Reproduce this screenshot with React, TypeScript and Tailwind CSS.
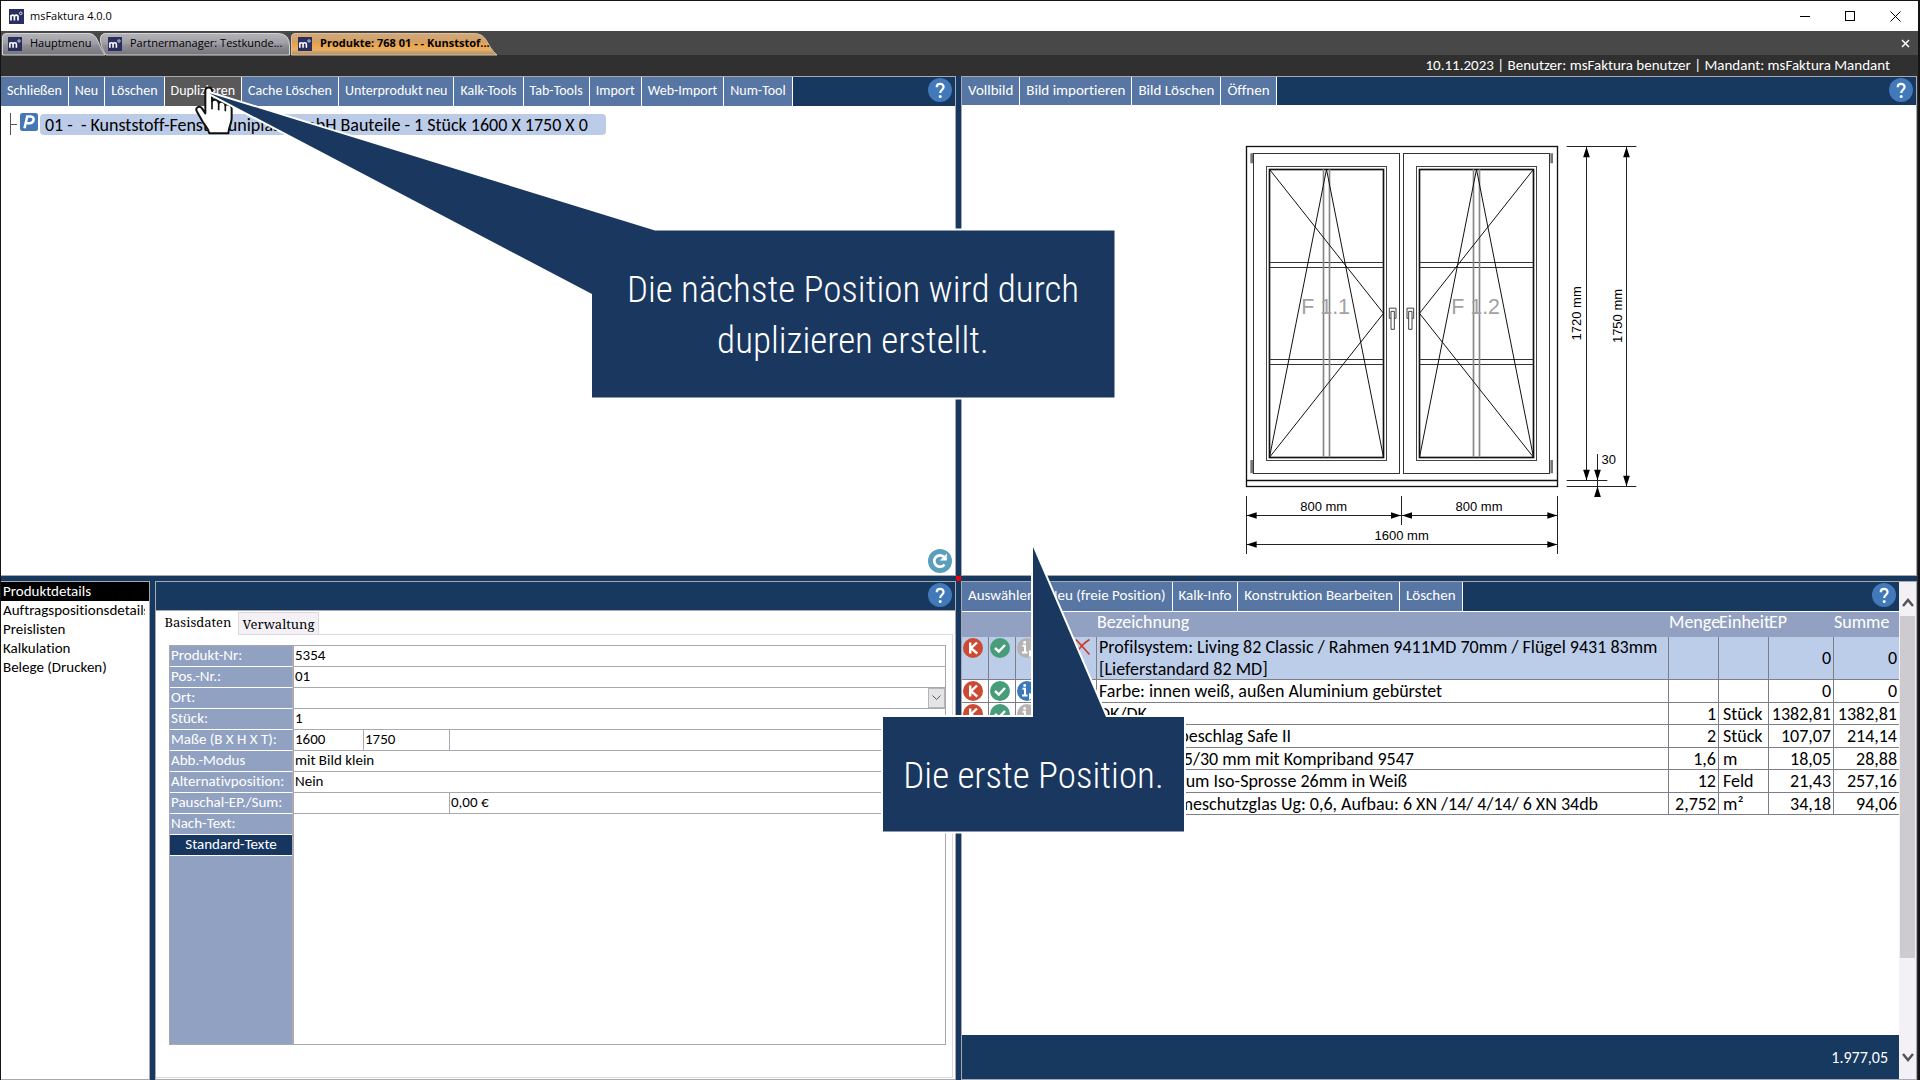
import React from "react";

const BLANK = "";

function AppIcon({ small = false }: { small?: boolean }) {
  return (
    <svg viewBox="0 0 15 15" className={small ? "h-3.5 w-3.5 shrink-0" : "h-[15px] w-[15px] shrink-0"} aria-hidden="true">
      <rect width="15" height="15" fill="#2a2f5f" />
      <path d="M2 11.500V6M2 7.800C2 5.600 5.400 5.600 5.400 7.800V11.500M5.400 7.800C5.400 5.600 9 5.600 9 7.800V11.500" fill="none" stroke="#fff" strokeWidth="1.700" />
      <circle cx="11.800" cy="4.300" r="1.300" fill="none" stroke="#e6e6f0" strokeWidth="0.900" />
    </svg>
  );
}

function TitleBar() {
  return (
    <header className="flex h-[30px] shrink-0 items-center bg-white pl-2">
      <AppIcon />
      <h1 className="ml-1.5 font-['Open_Sans',sans-serif] text-[11px] text-black">msFaktura 4.0.0</h1>
      <div className="ml-auto flex h-full items-center">
        <button aria-label="Minimieren" className="grid h-full w-[45px] place-items-center">
          <svg width="11" height="11" viewBox="0 0 11 11"><path d="M0 5.500H10" stroke="#000" /></svg>
        </button>
        <button aria-label="Maximieren" className="grid h-full w-[45px] place-items-center">
          <svg width="11" height="11" viewBox="0 0 11 11"><rect x="0.500" y="0.500" width="9" height="9" fill="none" stroke="#000" /></svg>
        </button>
        <button aria-label="Schließen" className="grid h-full w-[45px] place-items-center">
          <svg width="11" height="11" viewBox="0 0 11 11"><path d="M0.500 0.500L10.500 10.500M10.500 0.500L0.500 10.500" stroke="#000" /></svg>
        </button>
      </div>
    </header>
  );
}

type TabProps = { label: string; active?: boolean; width: string; path: string; box: string; indent: string };

function WindowTab({ label, active, width, path, box, indent }: TabProps) {
  const id = active ? "tab-active" : "tab-idle-" + label.slice(0, 4);
  return (
    <button role="tab" aria-selected={!!active} className={`relative flex h-[23px] items-center text-left ${width}`}>
      <svg className="absolute inset-0 h-full w-full overflow-visible" viewBox={box} preserveAspectRatio="none" aria-hidden="true">
        <defs>
          <linearGradient id={id} x1="0" y1="0" x2="0" y2="1">
            {active ? (
              <>
                <stop offset="0" stopColor="#d3a878" />
                <stop offset="0.400" stopColor="#d2a06a" />
                <stop offset="0.480" stopColor="#eda347" />
                <stop offset="0.750" stopColor="#e7b166" />
                <stop offset="1" stopColor="#a88c70" />
              </>
            ) : (
              <>
                <stop offset="0" stopColor="#b4b3b8" />
                <stop offset="0.450" stopColor="#a09fa5" />
                <stop offset="0.550" stopColor="#908f96" />
                <stop offset="1" stopColor="#757479" />
              </>
            )}
          </linearGradient>
        </defs>
        <path d={path} fill={`url(#${id})`} stroke={active ? "#dcc09c" : "#d4d4d8"} />
      </svg>
      <span className={`relative flex items-center ${indent}`}>
        <AppIcon small />
        <span className={`ml-2 whitespace-nowrap font-['Open_Sans',sans-serif] text-[11px] text-black ${active ? "font-bold" : ""}`}>{label}</span>
      </span>
    </button>
  );
}

function TabStrip() {
  return (
    <nav className="flex h-6 shrink-0 items-end bg-[#484848]" aria-label="Fenster">
      <div role="tablist" className="flex items-end">
        <WindowTab label="Hauptmenu" width="w-[99px]" box="0 0 99 23" indent="pl-[7px]"
          path="M1.500 23V5Q1.500 1.500 5 1.500H88C97 1.500 97 14 104 23Z" />
        <WindowTab label="Partnermanager: Testkunde..." width="w-[190px]" box="0 0 190 23" indent="pl-2"
          path="M6 23C2 17 0.500 12 0.500 7Q0.500 1.500 6 1.500H178Q189.500 1.500 189.500 14V23Z" />
        <WindowTab active label="Produkte: 768 01 - - Kunststof..." width="w-[208px]" box="0 0 208 23" indent="pl-2"
          path="M1.500 23V5Q1.500 1.500 5 1.500H184C198 1.500 196 14 207 23Z" />
      </div>
      <button aria-label="Register schließen" className="ml-auto mr-1.5 grid h-full w-3.5 place-items-center">
        <svg width="9" height="9" viewBox="0 0 9 9"><path d="M1 1L8 8M8 1L1 8" stroke="#fff" strokeWidth="1.500" /></svg>
      </button>
    </nav>
  );
}

function HelpButton() {
  return (
    <button aria-label="Hilfe" className="h-6 w-6 shrink-0">
      <svg viewBox="0 0 24 24" className="h-6 w-6">
        <circle cx="12" cy="12" r="12" fill="#4179bb" />
        <path d="M8.700 9.200C8.700 4.800 15.600 4.900 15.600 9C15.600 11.600 12.200 11.900 12.200 15" fill="none" stroke="#fff" strokeWidth="2.200" />
        <circle cx="12.200" cy="18.400" r="1.500" fill="#fff" />
      </svg>
    </button>
  );
}

type ToolbarProps = { items: string[]; hovered?: string; height: string; textSize?: string };

function Toolbar({ items, hovered, height, textSize = "text-[15px]" }: ToolbarProps) {
  return (
    <div role="toolbar" className={`flex shrink-0 items-start bg-[#17385f] ${height}`}>
      {items.map((item) => (
        <button
          key={item}
          className={`h-full whitespace-nowrap border-r border-white px-1.5 pb-0.5 text-white ${textSize} ${item === hovered ? "bg-[#595959]" : "bg-[#5776a3]"}`}
        >
          {item}
        </button>
      ))}
      <div className="ml-auto mr-[3px] mt-px"><HelpButton /></div>
    </div>
  );
}

function ProductTree() {
  return (
    <section className="flex min-h-0 min-w-0 flex-col border-r border-t border-b border-[#a9a8b2] bg-white">
      <Toolbar
        height="h-[29px]"
        textSize="text-[14px]"
        hovered="Duplizieren"
        items={["Schließen", "Neu", "Löschen", "Duplizieren", "Cache Löschen", "Unterprodukt neu", "Kalk-Tools", "Tab-Tools", "Import", "Web-Import", "Num-Tool"]}
      />
      <ul role="tree" className="flex-1 pt-[7px]">
        <li role="treeitem" aria-selected="true" className="flex items-start pl-[9px]">
          <svg width="10" height="22" viewBox="0 0 10 22" aria-hidden="true"><path d="M0.500 0V22M0 11.500H7" stroke="#555" fill="none" /></svg>
          <svg width="18" height="18" viewBox="0 0 18 18" aria-hidden="true">
            <rect width="18" height="18" rx="2.500" fill="#4377b5" />
            <path d="M4.500 15.300L7.200 3.500H10.500C15.300 3.500 14.200 10.300 9.500 10.300H6" fill="none" stroke="#fff" strokeWidth="2.500" />
          </svg>
          <span className="ml-0.5 mt-px h-[21px] w-[566px] whitespace-pre rounded-sm bg-[#bccce8] pl-[5px] text-[18px] leading-[22px] text-black">
            01 -  - Kunststoff-Fenster uniplast GmbH Bauteile - 1 Stück 1600 X 1750 X 0
          </span>
        </li>
      </ul>
      <div className="flex justify-end pb-0.5 pr-[3px]">
        <button aria-label="Aktualisieren">
          <svg width="24" height="24" viewBox="0 0 24 24">
            <circle cx="12" cy="12" r="12" fill="#5b9fbd" />
            <path d="M16.500 15.500A5.700 5.700 0 1 1 16 8" fill="none" stroke="#fff" strokeWidth="2.700" />
            <path d="M18.800 4.500V11.500H11.800Z" fill="#fff" />
          </svg>
        </button>
      </div>
    </section>
  );
}

function Sash({ x, label, lx, handle }: { x: number; label: string; lx: number; handle: number }) {
  const mid = x + 171;
  return (
    <g fill="none" stroke="#111" strokeWidth="3">
      <rect x={x - 9} y="109.500" width="360" height="882" stroke="#444" />
      <rect x={x} y="118.500" width="342" height="864" strokeWidth="5" />
      <path d={`M${x} 397.500H${x + 342}M${x} 412.500H${x + 342}M${x} 688.500H${x + 342}M${x} 703.500H${x + 342}`} stroke="#333" />
      <path d={`M${mid - 9} 118V982M${mid + 9} 118V982`} stroke="#888" strokeWidth="5" />
      <path d={`M${x} 982L${mid} 118L${x + 342} 982`} />
      <path d={handle > 545 ? `M${x + 342} 118L${x} 550L${x + 342} 982` : `M${x} 118L${x + 342} 550L${x} 982`} />
      <path d={`M${handle - 10} 565V534.500H${handle + 10}V565H${handle + 5}V598H${handle - 5}V544H${handle + 5}V565M${handle - 10} 565H${handle - 5}`} stroke="#444" />
      <text x={lx} y="551" fontSize="64" fill="#a3a1a6" stroke="none" fontFamily="Liberation Sans, sans-serif">{label}</text>
    </g>
  );
}

function WindowDrawing() {
  const arrow = (x: number, y: number, dx: number, dy: number) =>
    dx !== 0 ? `M${x} ${y}l${dx * 30} -10v20z` : `M${x} ${y}l-10 ${dy * 32}h20z`;
  return (
    <svg width="440" height="440" viewBox="0 0 1320 1320" role="img" aria-label="Fensterzeichnung F 1.1 und F 1.2">
      <g fill="none" stroke="#111" strokeWidth="3">
        <rect x="79.500" y="49.500" width="933" height="1020" strokeWidth="4" />
        <path d="M79 1051.500H1012" strokeWidth="5" />
        <rect x="100.500" y="70.500" width="438" height="960" stroke="#333" />
        <rect x="550.500" y="70.500" width="438" height="960" stroke="#333" />
      </g>
      <path d="M91 70h8v30h-8zM991 70h8v30h-8zM91 990h8v40h-8zM991 990h8v40h-8z" fill="#777" />
      <Sash x={148.5} label="F 1.1" lx={244} handle={518} />
      <Sash x={598.5} label="F 1.2" lx={694} handle={571} />
      <g stroke="#222" strokeWidth="3" fill="none">
        <path d="M1040 49.500H1249M1040 1051.500H1162M1040 1069.500H1249" />
        <path d="M1099.500 50V1051M1219.500 50V1069M1132.500 972V1100" />
        <path d="M79.500 1098V1272M544.500 1098V1185M1012.500 1098V1272M79 1156.500H1012M79 1243.500H1012" />
      </g>
      <path
        fill="#000"
        d={arrow(1099.5, 50, 0, 1) + arrow(1099.5, 1051, 0, -1) + arrow(1219.5, 50, 0, 1) + arrow(1219.5, 1069, 0, -1) +
          arrow(1132.5, 1051, 0, -1) + arrow(1132.5, 1069, 0, 1) + arrow(80, 1156.5, 1, 0) + arrow(543, 1156.5, -1, 0) +
          arrow(546, 1156.5, 1, 0) + arrow(1012, 1156.5, -1, 0) + arrow(80, 1243.5, 1, 0) + arrow(1012, 1243.5, -1, 0)}
      />
      <g fontSize="39" fill="#000" fontFamily="Liberation Sans, sans-serif" textAnchor="middle">
        <text x="311" y="1143">800 mm</text>
        <text x="777" y="1143">800 mm</text>
        <text x="545" y="1230">1600 mm</text>
        <text x="1166" y="1002">30</text>
        <text transform="translate(1083 550) rotate(-90)">1720 mm</text>
        <text transform="translate(1206 558) rotate(-90)">1750 mm</text>
      </g>
    </svg>
  );
}

function PicturePanel() {
  return (
    <section className="flex min-h-0 min-w-0 flex-col border border-[#a9a8b2] bg-white">
      <Toolbar height="h-7" items={["Vollbild", "Bild importieren", "Bild Löschen", "Öffnen"]} />
      <div className="flex flex-1 justify-center pl-0.5 pt-[25px]"><WindowDrawing /></div>
    </section>
  );
}

function Sidebar() {
  const items = ["Produktdetails", "Auftragspositionsdetails", "Preislisten", "Kalkulation", "Belege (Drucken)"];
  return (
    <nav className="min-w-0 overflow-hidden border-b border-r border-t border-[#a9a8b2] bg-white" aria-label="Bereiche">
      {items.map((item, i) => (
        <a key={item} href="#" className={`block pl-0.5 pr-1 text-[15px] leading-[19px] ${i === 0 ? "bg-black text-white" : "text-black"}`}>
          <span className="block overflow-hidden whitespace-nowrap">{item}</span>
        </a>
      ))}
    </nav>
  );
}

function FieldRow({ id, label, children }: { id?: string; label: string; children: React.ReactNode }) {
  return (
    <div className="flex h-[21px]">
      <label htmlFor={id} className="w-[123px] shrink-0 whitespace-nowrap border-b border-r border-b-white border-r-[#b0aab4] bg-[#91a1c1] pl-px text-[15px] leading-[18px] text-white">
        {label}
      </label>
      <div className="flex min-w-0 flex-1 border-b border-l border-[#a9a8b0]">{children}</div>
    </div>
  );
}

const inputClass = "h-5 bg-white px-px pb-0.5 text-[15px] leading-[18px] text-black outline-none";

function DetailsForm() {
  return (
    <form className="ml-[13px] mr-[9px] flex h-[400px] flex-col border border-[#a9a8b0]">
      <FieldRow id="nr" label="Produkt-Nr:"><input id="nr" defaultValue="5354" className={`${inputClass} min-w-0 flex-1`} /></FieldRow>
      <FieldRow id="pos" label="Pos.-Nr.:"><input id="pos" defaultValue="01" className={`${inputClass} min-w-0 flex-1`} /></FieldRow>
      <FieldRow id="ort" label="Ort:">
        <div className="relative flex flex-1">
          <select id="ort" className={`${inputClass} flex-1 appearance-none`}><option>{BLANK}</option></select>
          <span className="pointer-events-none absolute inset-y-0 right-0 grid w-[17px] place-items-center border border-[#b5b5b5] bg-[#e4e3e5]">
            <svg width="9" height="6" viewBox="0 0 9 6"><path d="M0.500 0.500L4.500 4.500L8.500 0.500" fill="none" stroke="#555" /></svg>
          </span>
        </div>
      </FieldRow>
      <FieldRow id="stk" label="Stück:"><input id="stk" defaultValue="1" className={`${inputClass} min-w-0 flex-1`} /></FieldRow>
      <FieldRow id="breite" label="Maße (B X H X T):">
        <input id="breite" defaultValue="1600" className={`${inputClass} w-[70px] border-r border-[#a9a8b0]`} />
        <input aria-label="Höhe" defaultValue="1750" className={`${inputClass} w-[86px] border-r border-[#a9a8b0]`} />
        <input aria-label="Tiefe" className={`${inputClass} min-w-0 flex-1`} />
      </FieldRow>
      <FieldRow id="abb" label="Abb.-Modus"><input id="abb" defaultValue="mit Bild klein" className={`${inputClass} min-w-0 flex-1`} /></FieldRow>
      <FieldRow id="alt" label="Alternativposition:"><input id="alt" defaultValue="Nein" className={`${inputClass} min-w-0 flex-1`} /></FieldRow>
      <FieldRow id="ep" label="Pauschal-EP./Sum:">
        <input id="ep" className={`${inputClass} w-[156px] border-r border-[#a9a8b0]`} />
        <input aria-label="Pauschal-Summe" defaultValue="0,00 €" className={`${inputClass} min-w-0 flex-1`} />
      </FieldRow>
      <div className="flex min-h-0 flex-1">
        <div className="flex w-[123px] shrink-0 flex-col border-r border-[#b0aab4] bg-[#91a1c1]">
          <label htmlFor="nach" className="h-5 pl-px text-[15px] leading-[18px] text-white">Nach-Text:</label>
          <button type="button" className="h-[22px] border-y border-white bg-[#17365f] pb-0.5 text-[15px] leading-[18px] text-white">Standard-Texte</button>
        </div>
        <textarea id="nach" className="min-w-0 flex-1 resize-none border-l border-[#a9a8b0] bg-white outline-none" />
      </div>
    </form>
  );
}

function DetailsPanel() {
  return (
    <section className="flex min-w-0 flex-col border border-[#a9a8b2] bg-white">
      <div className="flex h-[29px] shrink-0 justify-end border-b border-[#a9a8b2] bg-[#17385f] pr-[3px] pt-px"><HelpButton /></div>
      <div role="tablist" className="flex h-6 shrink-0 font-['Noto_Serif',serif] text-[13px] leading-5 text-black">
        <button role="tab" aria-selected="true" className="w-[82px] pb-0.5 pl-0.5">Basisdaten</button>
        <button role="tab" aria-selected="false" className="mt-px w-[81px] border border-[#dcd8e0] bg-[#f4f1f6]">Verwaltung</button>
        <div className="mr-0.5 flex-1 border-b border-[#dcd8e0]" />
      </div>
      <div className="mb-px mr-0.5 flex flex-1 flex-col border-b border-r border-[#dcd8e0] pt-2.5">
        <div className="-mr-[3px]"><DetailsForm /></div>
      </div>
    </section>
  );
}

function KIcon() {
  return (
    <svg width="20" height="20" viewBox="0 0 20 20" aria-label="Kalkulation">
      <circle cx="10" cy="10" r="10" fill="#cc4a34" />
      <path d="M7.200 4.500V15.500M14 4.500L8 10.200L14.300 15.500" fill="none" stroke="#fff" strokeWidth="2.400" />
    </svg>
  );
}

function CheckIcon() {
  return (
    <svg width="20" height="20" viewBox="0 0 20 20" aria-label="Aktiv">
      <circle cx="10" cy="10" r="10" fill="#479d7a" />
      <path d="M5 10L8.800 13.500L15 7" fill="none" stroke="#fff" strokeWidth="2.400" />
    </svg>
  );
}

function InfoIcon({ on }: { on: boolean }) {
  return (
    <svg width="20" height="20" viewBox="0 0 20 20" aria-label="Info">
      <circle cx="10" cy="10" r="10" fill={on ? "#3c79bb" : "#b4b2b2"} />
      <path d="M5.500 7.800H8V14.500M5 14.500H10.500" fill="none" stroke="#fff" strokeWidth="2" />
      <circle cx="7.700" cy="4.500" r="1.400" fill="#fff" />
      <path d="M12 12L19 15L12 19Z" fill="#fff" />
    </svg>
  );
}

function CrossIcon() {
  return (
    <svg className="ml-1" width="16" height="18" viewBox="0 0 16 18" aria-label="Entfernen">
      <path d="M1 1.500L14.500 16.500M14.500 1.500C9 5 4 10 1 16" fill="none" stroke="#cc3d2e" strokeWidth="1.800" />
    </svg>
  );
}

type Row = { text: string; menge: string; einheit: string; ep: string; summe: string; height: string; info?: boolean };

const rows: Row[] = [
  { text: "Profilsystem: Living 82 Classic / Rahmen 9411MD 70mm / Flügel 9431 83mm\n[Lieferstandard 82 MD]", menge: "", einheit: "", ep: "0", summe: "0", height: "h-[43px]" },
  { text: "Farbe: innen weiß, außen Aluminium gebürstet", menge: "", einheit: "", ep: "0", summe: "0", height: "h-[23px]", info: true },
  { text: "DK/DK", menge: "1", einheit: "Stück", ep: "1382,81", summe: "1382,81", height: "h-[22px]" },
  { text: "Sicherheitsbeschlag Safe II", menge: "2", einheit: "Stück", ep: "107,07", summe: "214,14", height: "h-[23px]" },
  { text: "Anschluss 25/30 mm mit Kompriband 9547", menge: "1,6", einheit: "m", ep: "18,05", summe: "28,88", height: "h-[22px]" },
  { text: "SZR Aluminium Iso-Sprosse 26mm in Weiß", menge: "12", einheit: "Feld", ep: "21,43", summe: "257,16", height: "h-[23px]" },
  { text: "3-fach Wärmeschutzglas Ug: 0,6, Aufbau: 6 XN /14/ 4/14/ 6 XN 34db", menge: "2,752", einheit: "m²", ep: "34,18", summe: "94,06", height: "h-[22px]" },
];

function PositionTable() {
  const line = "border-b border-r border-[#7f7e88]";
  return (
    <table className="w-full table-fixed border-separate border-spacing-0 text-[18px] leading-[22px] text-black">
      <colgroup>
        <col className="w-[27px]" /><col className="w-[27px]" /><col className="w-[27px]" /><col className="w-[27px]" /><col className="w-[27px]" />
        <col />
        <col className="w-[50px]" /><col className="w-[50px]" /><col className="w-[65px]" /><col className="w-[65px]" />
      </colgroup>
      <thead>
        <tr className="h-[25px] bg-[#92a1c1] text-left align-top text-white [&>th]:p-0 [&>th]:font-normal [&>th]:leading-5">
          <th colSpan={5} aria-label="Status" />
          <th>Bezeichnung</th><th>Menge</th><th>Einheit</th><th>EP</th><th>Summe</th>
        </tr>
      </thead>
      <tbody>
        {rows.map((r, i) => (
          <tr key={r.text} className={`${r.height} ${i === 0 ? "bg-[#bccde9]" : "bg-white"} [&>td]:p-0`}>
            {[<KIcon key="k" />, <CheckIcon key="c" />, <InfoIcon key="i" on={!!r.info} />, null, <CrossIcon key="x" />].map((icon, n) => (
              <td key={n} className={`${line} align-top`}><div className="h-[21px] overflow-hidden pl-px pt-px">{icon}</div></td>
            ))}
            <td className={line}><div className="-my-px overflow-hidden whitespace-pre pl-0.5">{r.text}</div></td>
            <td className={`${line} text-right`}><div className="-my-px pr-0.5">{r.menge}</div></td>
            <td className={line}><div className="-my-px pl-1">{r.einheit}</div></td>
            <td className={`${line} text-right`}><div className="-my-px pr-0.5">{r.ep}</div></td>
            <td className="border-b border-[#7f7e88] text-right"><div className="-my-px pr-0.5">{r.summe}</div></td>
          </tr>
        ))}
      </tbody>
    </table>
  );
}

function PositionsPanel() {
  return (
    <section className="flex min-w-0 border border-[#a9a8b2] bg-white">
      <div className="flex min-w-0 flex-1 flex-col">
        <div className="border-b border-white">
          <Toolbar height="h-[29px]" items={["Auswählen", "Neu (freie Position)", "Kalk-Info", "Konstruktion Bearbeiten", "Löschen"]} />
        </div>
        <PositionTable />
        <footer className="mt-auto flex h-11 items-center justify-end bg-[#17385f] pr-[11px] pt-0.5 text-base text-white">1.977,05</footer>
      </div>
      <div className="flex w-[17px] shrink-0 flex-col items-center bg-[#f3f1f5] pt-4" aria-hidden="true">
        <svg width="12" height="9" viewBox="0 0 12 9"><path d="M1 8L6 2L11 8" fill="none" stroke="#555" strokeWidth="2.500" /></svg>
        <div className="mt-[9px] h-[342px] w-[15px] bg-[#cdcbd0]" />
        <svg className="mb-[17px] mt-auto" width="12" height="9" viewBox="0 0 12 9"><path d="M1 1L6 7L11 1" fill="none" stroke="#555" strokeWidth="2.500" /></svg>
      </div>
    </section>
  );
}

function HandCursor() {
  return (
    <svg className="pointer-events-none absolute left-[193px] top-[84px]" width="41" height="51" viewBox="0 0 123 153" aria-hidden="true">
      <path
        d="M34 85V17C34 4 54 4 54 17V49C58 41 73 43 74 54C80 47 93 51 94 60C101 56 113 60 113 70V100C113 116 104 126 103 145H46C43 130 35 124 27 112L9 80C2 68 16 60 24 70Z"
        fill="#fff" stroke="#111" strokeWidth="6" strokeLinejoin="round"
      />
      <path d="M54 46V73M74 54V76M94 60V79" stroke="#111" strokeWidth="5" fill="none" />
    </svg>
  );
}

function Callouts() {
  const text = "absolute flex items-center justify-center whitespace-pre-line pt-0.5 text-center font-['Roboto_Condensed','Roboto',sans-serif] text-[37px] font-light leading-[51px] text-white";
  return (
    <div className="pointer-events-none absolute -left-px -top-px z-10 h-[860px] w-[1200px]">
      <svg className="h-full w-full" viewBox="0 0 1200 860" aria-hidden="true">
        <g fill="#19375f" stroke="#fff" strokeWidth="4" paintOrder="stroke" strokeLinejoin="miter" strokeMiterlimit="2">
          <path d="M209 93L655 230.500H1114.500V397.500H592V294Z" />
          <path d="M1033 547L1106 717H1184V831.500H883V717H1033Z" />
        </g>
      </svg>
      <p className={`${text} left-[592px] top-[231px] h-[166px] w-[522px]`}>{"Die nächste Position wird durch\nduplizieren erstellt."}</p>
      <p className={`${text} left-[883px] top-[717px] h-[114px] w-[301px]`}>Die erste Position.</p>
    </div>
  );
}

export default function App() {
  return (
    <div className="relative flex h-screen flex-col overflow-hidden border-l border-r-2 border-t border-[#141414] bg-[#303030] font-['Carlito','Calibri','Lato',sans-serif] [font-variant-ligatures:none]">
      <TitleBar />
      <TabStrip />
      <div className="flex h-[21px] shrink-0 items-center justify-end whitespace-pre bg-[#303030] pr-7 text-[15px] text-white">
        10.11.2023 | Benutzer: msFaktura benutzer | Mandant: msFaktura Mandant
      </div>
      <main className="mr-px grid min-h-0 flex-1 grid-cols-[955fr_5px_956fr] grid-rows-[500fr_5px_499fr] bg-[#17385f]">
        <ProductTree />
        <div />
        <PicturePanel />
        <div />
        <div className="bg-[#f00012]" />
        <div />
        <div className="grid min-h-0 min-w-0 grid-cols-[149px_5px_1fr]">
          <Sidebar />
          <div />
          <DetailsPanel />
        </div>
        <div />
        <PositionsPanel />
      </main>
      <HandCursor />
      <Callouts />
    </div>
  );
}
